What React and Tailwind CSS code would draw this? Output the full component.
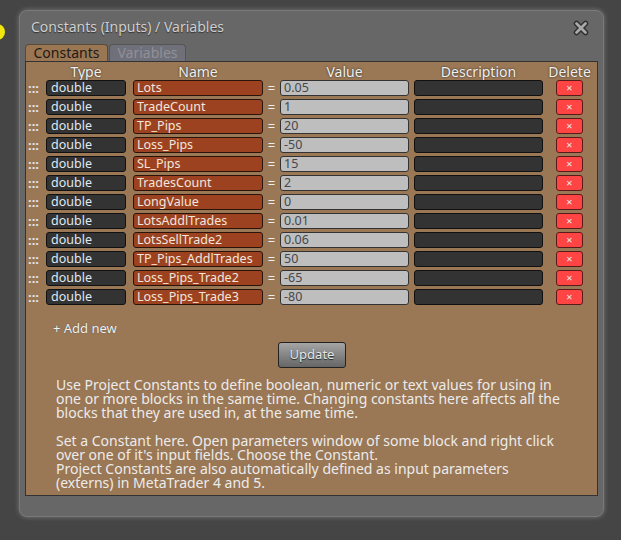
import React from "react";

const rows = [
  ["Lots", "0.05"],
  ["TradeCount", "1"],
  ["TP_Pips", "20"],
  ["Loss_Pips", "-50"],
  ["SL_Pips", "15"],
  ["TradesCount", "2"],
  ["LongValue", "0"],
  ["LotsAddlTrades", "0.01"],
  ["LotsSellTrade2", "0.06"],
  ["TP_Pips_AddlTrades", "50"],
  ["Loss_Pips_Trade2", "-65"],
  ["Loss_Pips_Trade3", "-80"],
];

const font = { fontFamily: "'Noto Sans', 'Open Sans', sans-serif" };

function CloseIcon() {
  return (
    <svg width="16" height="16" viewBox="0 0 16 16">
      <path d="M3.5 3.5 L12.5 12.5 M12.5 3.5 L3.5 12.5" stroke="#2e2e2e" strokeWidth="5.5" strokeLinecap="round" />
      <path d="M3.5 3.5 L12.5 12.5 M12.5 3.5 L3.5 12.5" stroke="#a9a9a9" strokeWidth="2.8" strokeLinecap="round" />
    </svg>
  );
}

export default function App() {
  return (
    <div
      className="relative w-[621px] h-[540px] bg-[#454545] overflow-hidden pl-[19px] pt-[10px] text-[13px]"
      style={font}
    >
      <div className="absolute left-[-11px] top-[24px] w-[16px] h-[16px] rounded-full bg-[#f2e60f]" />
      <div className="w-[585px] h-[507px] rounded-[8px] bg-[#676767] border border-[#7a7a7a] shadow-[0_0_4px_1px_rgba(150,150,150,0.45)] flex flex-col px-[5px]">
        <div className="h-[33px] flex items-center justify-between pl-[6px] pr-[9px] pb-[3px]">
          <span className="text-[14px] text-[#cfcfcf] [text-shadow:0_1px_1px_#333]">
            Constants (Inputs) / Variables
          </span>
          <span className="pt-[3px]">
            <CloseIcon />
          </span>
        </div>
        <div className="flex h-[17px] items-end">
          <div className="w-[83px] h-[17px] rounded-t-[4px] bg-[#9b7653] border border-b-0 border-[#5a4a3a] text-[14px] leading-[16px] text-[#1e1a16] flex justify-center">
            Constants
          </div>
          <div className="w-[77px] ml-[1px] h-[17px] rounded-t-[4px] bg-[#6f7079] border border-b-0 border-[#555] text-[14px] leading-[16px] text-[#8f9098] flex justify-center">
            Variables
          </div>
        </div>
        <div className="h-[435px] bg-[#9a7755] border border-[#333] flex flex-col">
          <div className="flex h-[18px] items-center text-[14px] text-[#f0f0f0] [text-shadow:0_0_2px_#222] pl-[20px]">
            <div className="w-[80px] text-center">Type</div>
            <div className="w-[130px] ml-[7px] text-center">Name</div>
            <div className="w-[129px] ml-[17px] text-center">Value</div>
            <div className="w-[129px] ml-[5px] text-center">Description</div>
            <div className="w-[27px] ml-[13px] flex justify-center whitespace-nowrap">Delete</div>
          </div>
          <div className="flex flex-col gap-[3px] pl-[1px] text-[12.5px]">
            {rows.map(([name, val]) => (
              <div key={name} className="flex h-[16px] items-center">
                <div className="w-[19px] text-[#e4e4e4] text-[13px] font-bold leading-[16px] pl-[1px]">
                  :::
                </div>
                <div className="w-[80px] h-[16px] rounded-[3px] bg-[#333] border border-[#111] text-[#dfe8f2] leading-[14px] pl-[4px]">
                  double
                </div>
                <div className="w-[130px] ml-[7px] h-[16px] rounded-[3px] bg-[#9c4220] border border-[#2a140a] text-[#f2e6de] leading-[14px] pl-[3px]">
                  {name}
                </div>
                <div className="w-[17px] text-center text-[#eee] text-[13px] leading-[16px]">=</div>
                <div className="w-[129px] h-[16px] rounded-[3px] bg-[#bebebe] border border-[#333] text-[#45474d] leading-[14px] pl-[3px]">
                  {val}
                </div>
                <div className="w-[129px] ml-[5px] h-[16px] rounded-[3px] bg-[#333] border border-[#111]" />
                <div className="w-[27px] ml-[13px] h-[16px] rounded-[3px] bg-[#ff4444] border border-[#5a1a1a] flex items-center justify-center text-[#e8e8e8] text-[11px] leading-[14px]">
                  ×
                </div>
              </div>
            ))}
          </div>
          <div className="pl-[27px] mt-[14px] text-[#f2f2f2] leading-[18px] [text-shadow:0_0_1px_#444]">
            + Add new
          </div>
          <div className="flex justify-center mt-[5px] pl-[1px]">
            <button className="w-[68px] h-[26px] rounded-[3px] border border-[#222] bg-gradient-to-b from-[#a5a5a5] to-[#666] text-[#e6e6e6] [text-shadow:0_1px_1px_#222] text-[13px]">
              Update
            </button>
          </div>
          <div className="pl-[30px] pr-[10px] mt-[10px] text-[#ececec] text-[14px] leading-[14px] whitespace-nowrap">
            <p>
              Use Project Constants to define boolean, numeric or text values for using in
              <br />
              one or more blocks in the same time. Changing constants here affects all the
              <br />
              blocks that they are used in, at the same time.
            </p>
            <p className="mt-[14px]">
              Set a Constant here. Open parameters window of some block and right click
              <br />
              over one of it's input fields. Choose the Constant.
              <br />
              Project Constants are also automatically defined as input parameters
              <br />
              (externs) in MetaTrader 4 and 5.
            </p>
          </div>
        </div>
      </div>
    </div>
  );
}
